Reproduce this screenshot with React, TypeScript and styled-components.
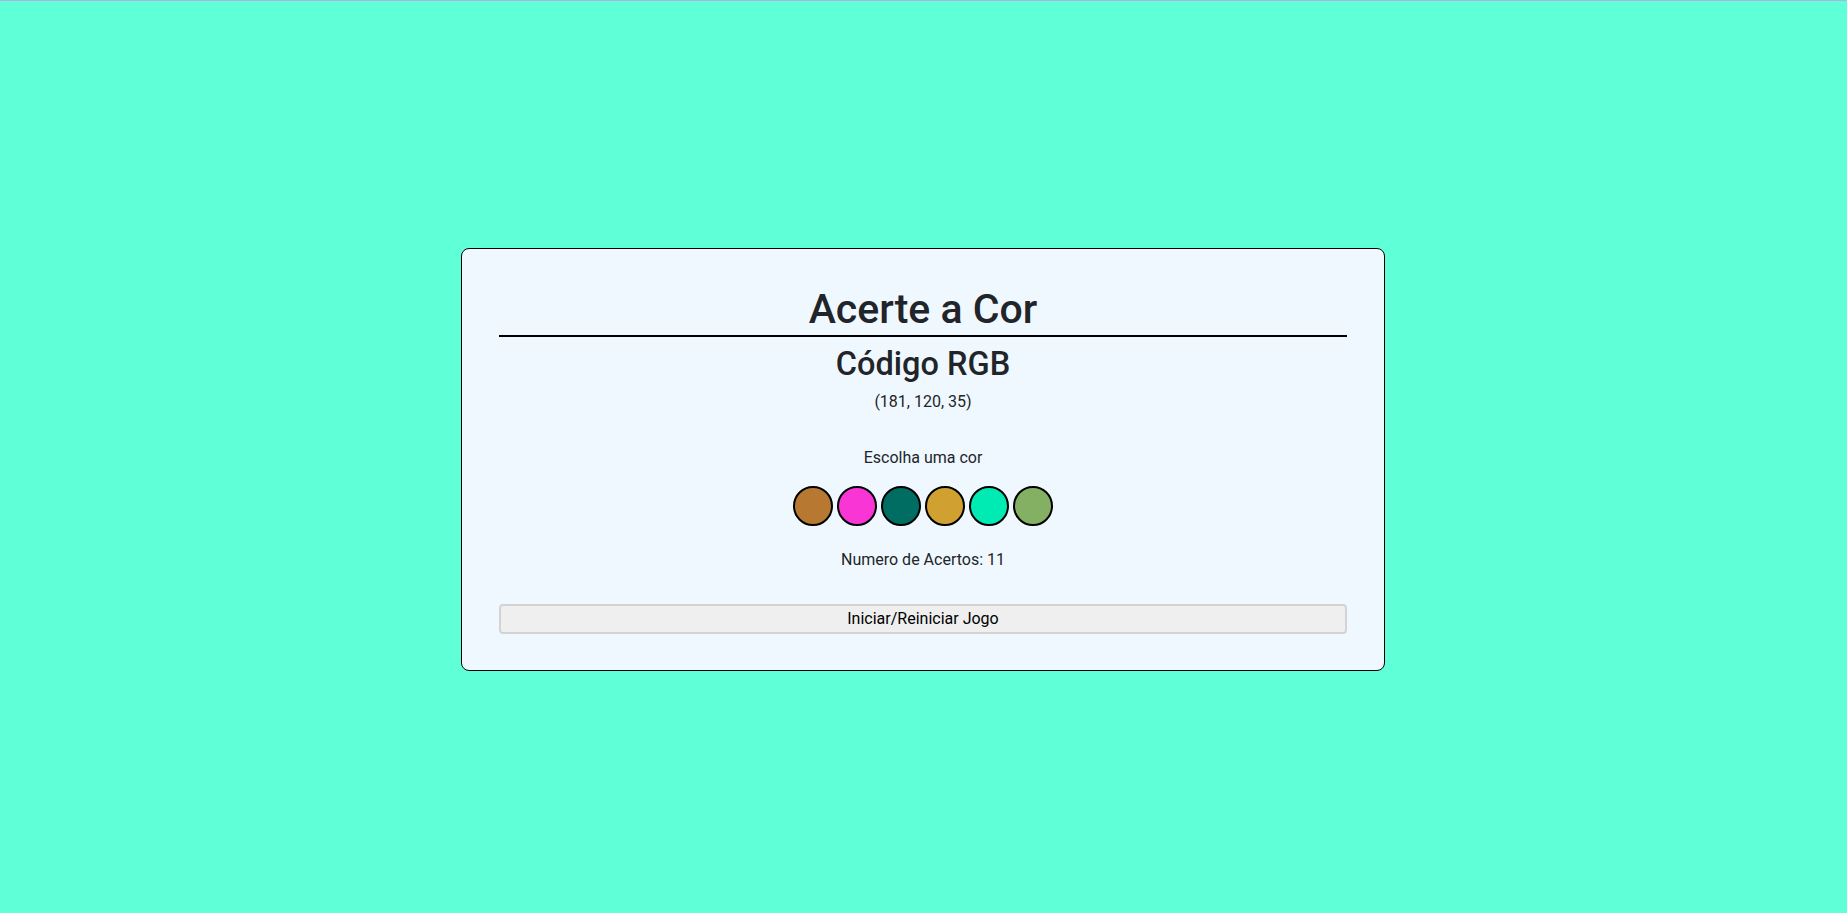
import React from "react";
import styled, { createGlobalStyle } from "styled-components";

const GlobalStyle = createGlobalStyle`
  *, *::before, *::after { box-sizing: border-box; }
  html, body { margin: 0; padding: 0; }
  body {
    background: #5fffd7;
    font-family: Roboto, "Liberation Sans", sans-serif;
    font-size: 16px;
    color: #212529;
  }
`;

const Page = styled.main`
  min-height: 100vh;
  border-top: 1px solid #b3aee6;
  padding: 5px 1px 0 0;
  display: flex;
  align-items: center;
  justify-content: center;
`;

const Card = styled.section`
  width: 924px;
  background: #f0f8ff;
  border: 1px solid #000;
  border-radius: 8px;
  padding: 36px 37px 36px;
  display: flex;
  flex-direction: column;
  align-items: center;
  text-align: center;
`;

const Title = styled.h1`
  margin: 0;
  font-size: 41px;
  font-weight: 500;
  line-height: 48px;
  color: #212529;
`;

const Divider = styled.hr`
  align-self: stretch;
  margin: 2px 0 0;
  border: 0;
  height: 2px;
  background: #000;
`;

const Subtitle = styled.h2`
  margin: 8px 0 0;
  font-size: 32.5px;
  font-weight: 500;
  line-height: 38px;
  color: #212529;
`;

const Text = styled.p<{ $gap: number }>`
  margin: ${(p) => p.$gap}px 0 0;
  font-size: 16px;
  line-height: 24px;
  color: #212529;
`;

const Swatches = styled.div`
  margin-top: 16px;
  display: flex;
  gap: 4px;
`;

const Swatch = styled.button<{ $color: string }>`
  width: 40px;
  height: 40px;
  padding: 0;
  border-radius: 50%;
  border: 2px solid #000;
  background: ${(p) => p.$color};
  cursor: pointer;
`;

const ResetButton = styled.button`
  align-self: stretch;
  margin-top: 32px;
  height: 30px;
  padding: 0;
  background: #efefef;
  border: 2px solid #d3d3d3;
  border-radius: 4px;
  font-family: Roboto, "Liberation Sans", sans-serif;
  font-size: 16px;
  line-height: 26px;
  color: #000;
  cursor: pointer;
`;

const colors = ["#b77832", "#fa35d5", "#006d62", "#d0a030", "#00ebb4", "#84b064"];

export default function App() {
  return (
    <>
      <GlobalStyle />
      <Page>
        <Card>
          <Title>Acerte a Cor</Title>
          <Divider />
          <Subtitle>Código RGB</Subtitle>
          <Text $gap={7}>(181, 120, 35)</Text>
          <Text $gap={32}>Escolha uma cor</Text>
          <Swatches>
            {colors.map((c) => (
              <Swatch key={c} $color={c} aria-label={c} />
            ))}
          </Swatches>
          <Text $gap={22}>Numero de Acertos: 11</Text>
          <ResetButton>Iniciar/Reiniciar Jogo</ResetButton>
        </Card>
      </Page>
    </>
  );
}
